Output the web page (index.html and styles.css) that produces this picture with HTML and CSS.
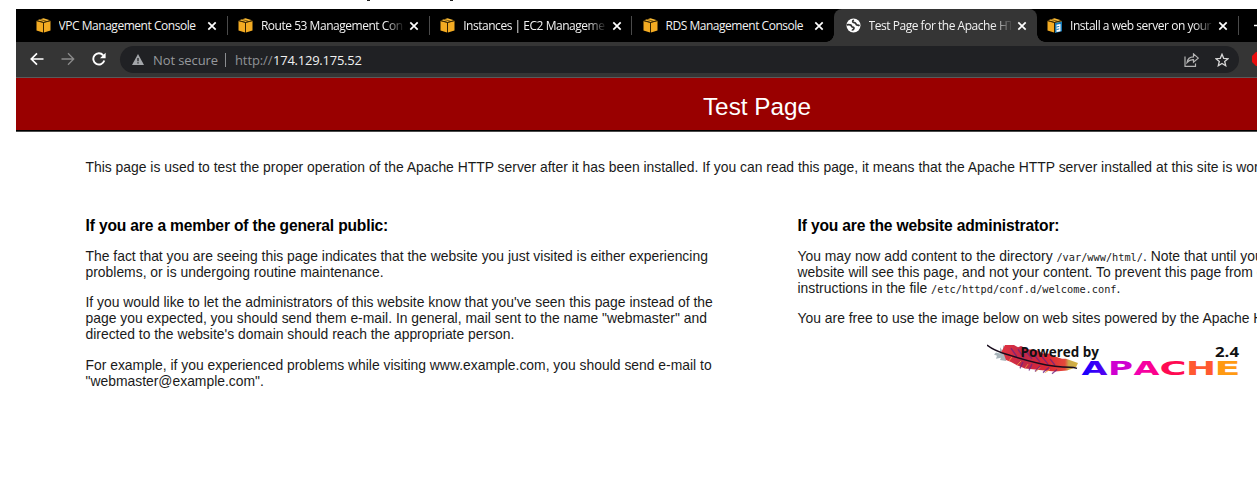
FILE: index.html
```html
<!DOCTYPE html>
<html lang="en">
<head>
<meta charset="utf-8">
<title>Test Page for the Apache HTTP Server</title>
<link rel="stylesheet" href="styles.css">
</head>
<body>
<svg class="defs" width="0" height="0" aria-hidden="true">
  <symbol id="cube" viewBox="0 0 15 15">
    <path fill="#f3ab22" d="M0.500 3v9.500L7 14.500V4.700zM14.500 3v9.500L8 14.500V4.700z"/>
    <path fill="#f9b934" d="M7.500 0.300L1 2.200l6.500 1.700L14 2.200z"/>
    <path stroke="#4b3000" stroke-width=".7" fill="none" d="M0.500 2.700L7.500 4.500l7-1.800M7.500 4.500V14.500M4 1.500l6.500 1.700"/>
  </symbol>
  <symbol id="close" viewBox="0 0 10 10"><path d="M1.300 1.300l7.400 7.400M8.700 1.300l-7.400 7.400" stroke="#fff" stroke-width="1.700"/></symbol>
</svg>
<div class="cropped-line"><i></i><i></i></div>
<div class="window">
  <div class="tabs">
    <div class="tab"><svg class="fav"><use href="#cube"/></svg><span class="title">VPC Management Console</span><svg class="x"><use href="#close"/></svg></div>
    <div class="tab sep"><svg class="fav"><use href="#cube"/></svg><span class="title fade">Route 53 Management Console</span><svg class="x"><use href="#close"/></svg></div>
    <div class="tab sep"><svg class="fav"><use href="#cube"/></svg><span class="title fade">Instances | EC2 Management Console</span><svg class="x"><use href="#close"/></svg></div>
    <div class="tab sep"><svg class="fav"><use href="#cube"/></svg><span class="title">RDS Management Console</span><svg class="x"><use href="#close"/></svg></div>
    <div class="tab active"><svg class="fav" viewBox="0 0 15 15"><circle cx="7.500" cy="7.500" r="7" fill="#fff"/><path d="M.8 6.800C3 6.500 5.300 6.800 5.600 8.300S8.200 8.400 8 10.200 6.300 11.400 6.200 12.600M7.800 2C5.800 3 6.600 4.700 8.300 4.600S9.800 6.200 10.500 6.800s2 .1 3 1" fill="none" stroke="#353535" stroke-width="1.700"/></svg><span class="title fade">Test Page for the Apache HTTP</span><svg class="x"><use href="#close"/></svg></div>
    <div class="tab"><svg class="fav" viewBox="0 0 15 15"><use href="#cube"/><path d="M8 5l7-1.500v9.800l-7 1.700z" fill="#1678b5"/><path d="M9.500 6.800l4-.8v7.200l-4 .8z" fill="#fff"/><path d="M9.500 9l2.800-.6M9.500 11.500l2.800-.6" stroke="#1678b5" stroke-width="1"/></svg><span class="title fade">Install a web server on your</span><svg class="x"><use href="#close"/></svg></div>
    <div class="tab sep newtab"><svg width="11" height="11" viewBox="0 0 11 11"><path d="M0 5.500h11M5.500 0v11" stroke="#fff" stroke-width="1.700"/></svg></div>
  </div>
  <div class="toolbar">
    <svg class="nav" viewBox="0 0 14 14"><path d="M13.500 7H1.500M7 1.300L1.300 7 7 12.700" fill="none" stroke="#fff" stroke-width="1.700"/></svg>
    <svg class="nav" viewBox="0 0 14 14"><path d="M.5 7h12M7 1.300L12.700 7 7 12.700" fill="none" stroke="#8b8b8b" stroke-width="1.300"/></svg>
    <svg class="nav" viewBox="0 0 14 14"><path d="M12.300 8.500A5.600 5.600 0 1 1 11.200 3.300" fill="none" stroke="#fff" stroke-width="1.900"/><path d="M13.600.7v5.600H8z" fill="#fff"/></svg>
    <div class="omnibox">
      <svg class="warn" width="12" height="11" viewBox="0 0 12 11"><path d="M6 0l6 11H0z" fill="#a3a6aa"/><path d="M6 4v3.300M6 8.300v1.200" stroke="#202124" stroke-width="1.300"/></svg>
      <span class="insecure">Not secure</span><span class="bar"></span>
      <span class="scheme">http://</span><span class="host">174.129.175.52</span>
      <span class="actions">
        <svg width="15" height="14" viewBox="0 0 15 14" fill="none" stroke="#b5b5b5" stroke-width="1.200"><path d="M1 3.500v9.800h10.500V10.500"/><path d="M3 9.500c.6-4 3.300-5.700 6.500-5.700V.9l4.800 4.200-4.800 4.200V6.700C6.500 6.500 4.800 7.400 3 9.500z"/></svg>
        <svg width="14" height="14" viewBox="0 0 14 14"><path d="M7 1.300l1.700 4 4.300.4-3.300 2.800 1 4.200L7 10.400l-3.700 2.300 1-4.200L1 5.700l4.300-.4z" fill="none" stroke="#d8d8d8" stroke-width="1.300"/></svg>
      </span>
    </div>
    <svg class="ext" width="14" height="14" viewBox="0 0 14 14"><path d="M4 0h6l4 4v6l-4 4H4l-4-4V4z" fill="#e80c0c"/></svg>
  </div>
  <header class="banner"><h1>Test Page</h1></header>
  <main>
    <p class="intro">This page is used to test the proper operation of the Apache HTTP server after it has been installed. If you can read this page, it means that the Apache HTTP server installed at this site is working properly.</p>
    <div class="columns">
      <section>
        <h2>If you are a member of the general public:</h2>
        <p>The fact that you are seeing this page indicates that the website you just visited is either experiencing<br>problems, or is undergoing routine maintenance.</p>
        <p>If you would like to let the administrators of this website know that you've seen this page instead of the<br>page you expected, you should send them e-mail. In general, mail sent to the name "webmaster" and<br>directed to the website's domain should reach the appropriate person.</p>
        <p>For example, if you experienced problems while visiting www.example.com, you should send e-mail to<br>"webmaster@example.com".</p>
      </section>
      <section>
        <h2>If you are the website administrator:</h2>
        <p>You may now add content to the directory <code>/var/www/html/</code>. Note that until you do so, people visiting your<br>website will see this page, and not your content. To prevent this page from ever being used, follow the<br>instructions in the file <code>/etc/httpd/conf.d/welcome.conf</code>.</p>
        <p>You are free to use the image below on web sites powered by the Apache HTTP Server:</p>
        <svg class="apache" width="260" height="36" viewBox="0 0 260 36">
          <defs>
            <linearGradient id="plume" x1="0" x2="1"><stop offset="0" stop-color="#e33340"/><stop offset=".3" stop-color="#c22848"/><stop offset=".6" stop-color="#dd2835"/><stop offset=".83" stop-color="#e5483b"/><stop offset=".88" stop-color="#c9a94c"/><stop offset="1" stop-color="#d6b13e"/></linearGradient>
            <linearGradient id="blueA" x1="0" x2="1"><stop offset="0" stop-color="#1200ff"/><stop offset="1" stop-color="#5b00ef"/></linearGradient>
            <linearGradient id="pinkA" x1="0" x2="1"><stop offset="0" stop-color="#f000b8"/><stop offset="1" stop-color="#ff0080"/></linearGradient>
          </defs>
          <g transform="translate(0 3) scale(1 1.060)">
            <path d="M9 8l4 1 0-6 3 4 0-6 4 5-1 10-6-1 1-2-5 1 1-3-3-1z" fill="#a9b5bb"/>
            <path d="M18 1l9 0 4 2 3-1 7 3 9 1 6 3 6 0 7 3 6 2 4 0 12 4-2 4-9 3-12 1-11-1-9-1-10-1-8-3-6-3-5-2-2-5-3-2z" fill="url(#plume)"/>
            <path d="M24 4l6 8M31 5l6 8M40 8l5 6M47 10l6 7M55 12l6 7M63 14l5 6M36 17l-3 6M45 19l-3 6M53 21l-5 5M62 22l-6 5M70 24l-5 4" stroke="#6f2380" stroke-width="1.300" opacity=".8"/>
            <path d="M22 16l3-4M30 20l4-4M38 23l3-4M49 26l4-4M58 27l5-3" stroke="#f39b3a" stroke-width=".8"/>
            <path d="M0 1C8 7 14 8 24 11S52 19 68 21s16 0 22 2" fill="none" stroke="#180c1d" stroke-width="1.400"/>
          </g>
          <text x="33.500" y="15.600" class="badge-text" textLength="78.500" lengthAdjust="spacingAndGlyphs">Powered by</text>
          <text x="228" y="15.600" class="badge-text" textLength="24" lengthAdjust="spacingAndGlyphs">2.4</text>
          <g class="word">
            <text x="94.500" y="33.500" textLength="26" lengthAdjust="spacingAndGlyphs" fill="url(#blueA)">A</text>
            <text x="121" y="33.500" textLength="25" lengthAdjust="spacingAndGlyphs" fill="#cf00d0">P</text>
            <text x="146.500" y="33.500" textLength="26" lengthAdjust="spacingAndGlyphs" fill="url(#pinkA)">A</text>
            <text x="172.500" y="33.500" textLength="27" lengthAdjust="spacingAndGlyphs" fill="#ff0a52">C</text>
            <text x="199" y="33.500" textLength="30" lengthAdjust="spacingAndGlyphs" fill="#ff5930">H</text>
            <text x="227.500" y="33.500" textLength="26" lengthAdjust="spacingAndGlyphs" fill="#ff9a12">E</text>
          </g>
        </svg>
      </section>
    </div>
  </main>
</div>
</body>
</html>
```
FILE: styles.css
```css
* { box-sizing: border-box; }
html, body { margin: 0; height: 477px; overflow: hidden; background: #fff; }
body { font-family: "Liberation Sans", Arial, sans-serif; color: #1a1a1a; }
.defs { position: absolute; }
.cropped-line { height: 9px; padding-left: 367px; display: flex; gap: 80px; }
.cropped-line i { width: 3px; height: 1px; background: #222; }
.window { margin-left: 16px; width: 1241px; overflow: hidden; }
svg { display: block; flex: none; }

.tabs { display: flex; height: 33px; padding-left: 9.300px; background: #000; }
.tab { display: flex; align-items: center; flex: none; width: 202.300px; padding-left: 10.500px; position: relative; }
.tab.sep::before { content: ""; position: absolute; left: -1px; top: 7px; width: 1px; height: 19px; background: #4a4a4a; }
.fav { width: 15px; height: 15px; margin-right: 7.800px; }
.title { width: 142px; padding-top: 1px; overflow: hidden; white-space: nowrap; color: #f2f2f2; font: 12px/18px "Open Sans", "Noto Sans", sans-serif; letter-spacing: -.47px; }
.fade { -webkit-mask-image: linear-gradient(90deg, #000 124px, transparent 144px); mask-image: linear-gradient(90deg, #000 124px, transparent 144px); }
.x { width: 10px; height: 10px; margin-left: 6.400px; }
.active { background: #353535; border-radius: 8px 8px 0 0; z-index: 1; padding-left: 11.300px; }
.active::before, .active::after { content: ""; position: absolute; bottom: 0; width: 8px; height: 8px; }
.active::before { left: -8px; background: radial-gradient(circle at 0 0, #000 7.500px, #353535 8px); }
.active::after { right: -8px; background: radial-gradient(circle at 100% 0, #000 7.500px, #353535 8px); }
.newtab { padding-left: 15px; }

.toolbar { display: flex; align-items: center; height: 36px; padding: 0 0 1px 14px; background: #353535; border-bottom: 1px solid #5a5a5a; }
.nav { width: 14px; height: 14px; margin-right: 17px; }
.omnibox { display: flex; align-items: center; flex: none; width: 1119px; height: 27px; margin-left: -3px; padding: 1px 10px 0 12px; border-radius: 14px; background: #202124; font: 13px/20px "Open Sans", "Noto Sans", sans-serif; white-space: nowrap; }
.warn { margin-right: 9px; }
.insecure { color: #96999d; width: 65px; letter-spacing: -.1px; }
.bar { width: 1px; height: 14px; margin: 0 9px 0 7px; background: #8b8d90; }
.scheme { color: #8f9296; width: 38px; letter-spacing: -.1px; }
.host { color: #f0f0f0; letter-spacing: -.24px; }
.actions { display: flex; gap: 16px; margin-left: auto; }
.ext { margin-left: 13px; }

.banner { height: 54px; background: #900; border-bottom: 1px solid #4b4b4b; box-shadow: inset 0 -1px #000; display: flex; justify-content: center; width: 1482px; }
h1 { margin: 0; font-weight: 400; font-size: 24.300px; line-height: 57px; color: #fff; }
main { padding: 27px 0 0 69.500px; width: 1482px; white-space: nowrap; }
p { margin: 0 0 14.300px; font-size: 13.900px; line-height: 16px; }
.intro { margin-bottom: 42px; }
.columns { display: grid; grid-template-columns: 712px 1fr; }
h2 { margin: 0 0 13px; font-size: 15.600px; line-height: 18px; letter-spacing: -.16px; color: #000; }
code { font-family: "DejaVu Sans Mono", monospace; font-size: 10.270px; line-height: 1; }
.apache { margin: 0 0 0 189.500px; }
.badge-text { font: 700 14px "Open Sans", sans-serif; fill: #111; }
.word { font: 700 19px "DejaVu Sans", sans-serif; }
```
